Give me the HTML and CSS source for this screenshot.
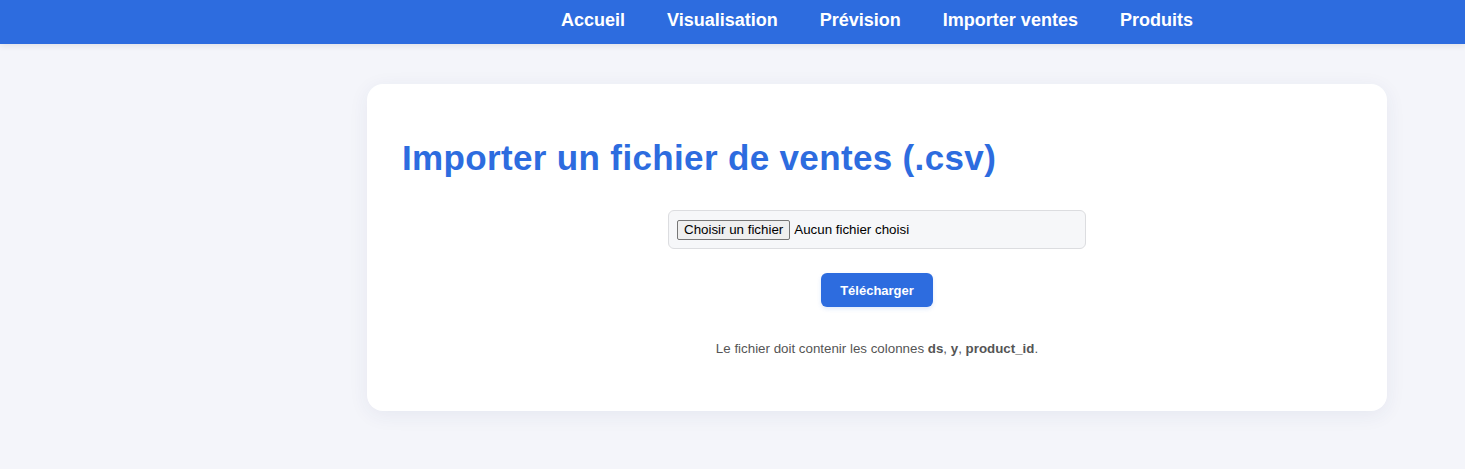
FILE: index.html
```html
<!DOCTYPE html>
<html lang="fr">
<head>
<meta charset="utf-8">
<title>Importer ventes</title>
<link rel="stylesheet" href="styles.css">
</head>
<body>
<nav class="navbar">
  <div class="nav-links">
    <a href="#">Accueil</a>
    <a href="#">Visualisation</a>
    <a href="#">Prévision</a>
    <a href="#">Importer ventes</a>
    <a href="#">Produits</a>
  </div>
</nav>
<main class="main">
  <section class="card">
    <h1 class="title">Importer un fichier de ventes (.csv)</h1>
    <form class="upload-form">
      <label class="file-box">
        <input type="file" accept=".csv" class="file-input">
        <span class="file-btn">Choisir un fichier</span>
        <span class="file-name">Aucun fichier choisi</span>
      </label>
      <button type="button" class="btn">Télécharger</button>
    </form>
    <p class="note">Le fichier doit contenir les colonnes <b>ds</b>, <b>y</b>, <b>product_id</b>.</p>
  </section>
</main>
</body>
</html>
```
FILE: styles.css
```css
* { box-sizing: border-box; }
html, body { margin: 0; padding: 0; }
body {
  background: #f4f5fa;
  font-family: "Liberation Sans", Arial, sans-serif;
  min-height: 469px;
}
.navbar {
  background: #2d6cdf;
  height: 44px;
  display: flex;
  justify-content: center;
  align-items: center;
  padding-left: 289px;
  padding-bottom: 4px;
  box-shadow: 0 2px 6px rgba(0,0,0,0.08);
}
.nav-links {
  display: flex;
  gap: 42px;
}
.nav-links a {
  color: #fff;
  text-decoration: none;
  font-weight: bold;
  font-size: 18px;
}
.main {
  padding: 40px 78px 0 367px;
}
.card {
  background: #fff;
  border-radius: 16px;
  box-shadow: 0 4px 20px rgba(40, 50, 120, 0.07);
  padding: 54px 35px 55px;
  width: 1020px;
}
.title {
  margin: 0 0 32px;
  color: #2d6cdf;
  font-size: 35px;
  font-weight: bold;
  letter-spacing: 0.35px;
}
.upload-form {
  display: flex;
  flex-direction: column;
  align-items: center;
  gap: 24px;
}
.file-box {
  width: 418px;
  height: 39px;
  background: #f6f7f9;
  border: 1px solid #dcdde0;
  border-radius: 6px;
  padding: 0 8px;
  display: flex;
  align-items: center;
  gap: 4px;
  font-size: 13.33px;
  color: #000;
}
.file-input { display: none; }
.file-btn {
  background: #efefef;
  border: 1px solid #767676;
  border-radius: 2px;
  padding: 1px 6px;
  height: 20px;
  line-height: 16px;
  color: #000;
}
.btn {
  background: #2d6cdf;
  color: #fff;
  border: none;
  border-radius: 6px;
  width: 112px;
  height: 34px;
  font-family: "Liberation Sans", Arial, sans-serif;
  font-weight: bold;
  font-size: 13px;
  box-shadow: 0 2px 4px rgba(45,108,223,0.15);
}
.note {
  text-align: center;
  color: #555;
  font-size: 13.33px;
  margin: 34px 0 0;
}
.note b { color: #555; }
```
